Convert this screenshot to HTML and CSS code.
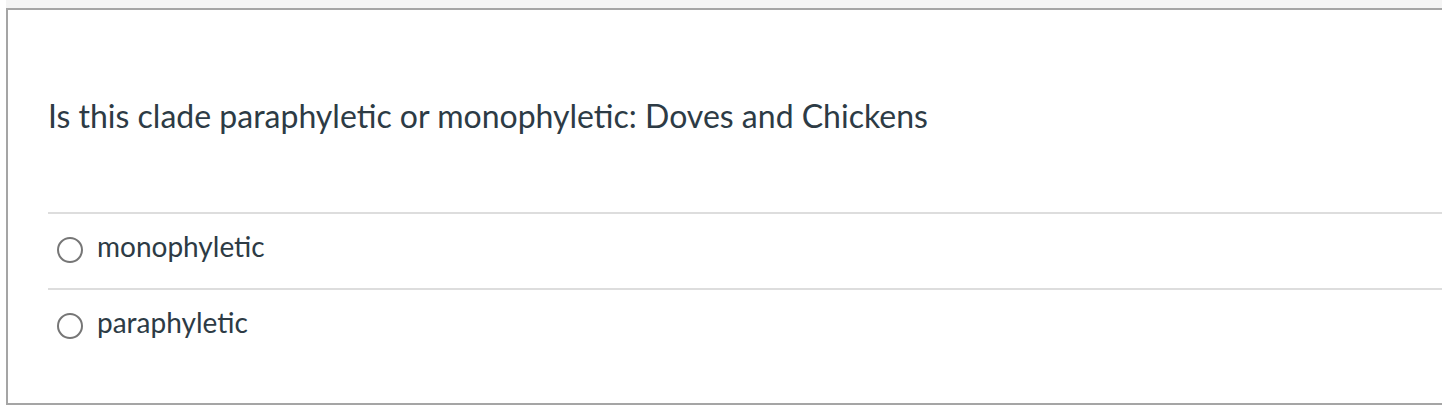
FILE: index.html
```html
<!DOCTYPE html>
<html>
<head>
<meta charset="utf-8">
<link rel="stylesheet" href="styles.css">
</head>
<body>
<div class="page">
  <div class="prev-band"></div>
  <div class="question">
    <div class="question-text">Is this clade paraphyletic or monophyletic: Doves and Chickens</div>
    <div class="answers">
      <label class="answer">
        <span class="radio"></span>
        <span class="answer-text">monophyletic</span>
      </label>
      <label class="answer">
        <span class="radio"></span>
        <span class="answer-text">paraphyletic</span>
      </label>
    </div>
  </div>
</div>
</body>
</html>
```
FILE: styles.css
```css
html, body {
  margin: 0;
  padding: 0;
  background: #ffffff;
}
body {
  font-family: Lato, "Open Sans", sans-serif;
  color: #2d3b45;
  overflow: hidden;
}
.page {
  padding-left: 6px;
  width: 1460px;
}
.prev-band {
  height: 8px;
  background: #f4f4f4;
}
.question {
  border-top: 2px solid #a5a5a5;
  border-left: 2px solid #a5a5a5;
  border-bottom: 2px solid #a5a5a5;
  height: 397px;
  box-sizing: border-box;
  padding: 87px 0 0 40px;
}
.question-text {
  font-size: 32px;
  line-height: 38px;
}
.answers {
  margin-top: 77px;
}
.answer {
  display: flex;
  align-items: center;
  gap: 14px;
  height: 76px;
  box-sizing: border-box;
  border-top: 2px solid #dddddd;
  padding-left: 9px;
  padding-bottom: 2px;
}
.radio {
  width: 26px;
  height: 26px;
  box-sizing: border-box;
  border: 2px solid #767676;
  border-radius: 50%;
  flex: none;
}
.answer-text {
  font-size: 28px;
  line-height: 34px;
  margin-bottom: 8px;
}
```
